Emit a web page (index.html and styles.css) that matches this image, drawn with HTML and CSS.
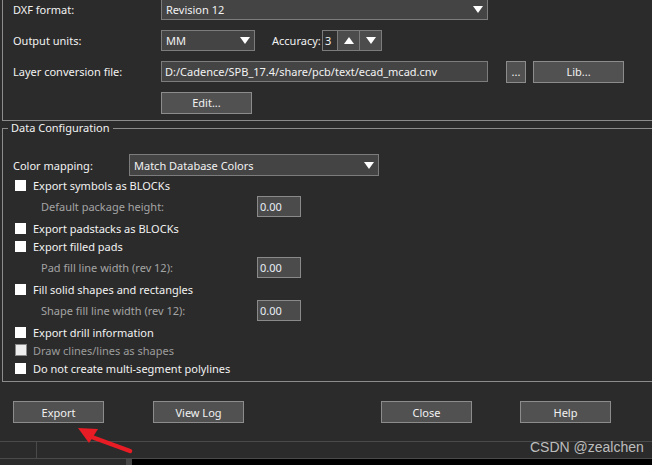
FILE: index.html
```html
<!DOCTYPE html>
<html lang="en">
<head>
    <meta charset="UTF-8">
    <meta name="viewport" content="width=device-width, initial-scale=1.0">
    <title>DXF Out</title>
    <link rel="stylesheet" href="styles.css">
</head>
<body>
    <div class="dialog">
        <div class="group-top">
            <div class="row">
                <label class="label">DXF format:</label>
                <div class="combo combo-wide">
                    <span>Revision 12</span>
                    <span class="arrow"></span>
                </div>
            </div>
            <div class="row">
                <label class="label">Output units:</label>
                <div class="combo combo-units">
                    <span>MM</span>
                    <span class="arrow"></span>
                </div>
                <label class="accuracy">Accuracy:</label>
                <div class="spin">
                    <span class="spin-value">3</span>
                    <span class="spin-btn"><span class="arrow up"></span></span>
                    <span class="spin-btn"><span class="arrow"></span></span>
                </div>
            </div>
            <div class="row">
                <label class="label">Layer conversion file:</label>
                <div class="field field-path">D:/Cadence/SPB_17.4/share/pcb/text/ecad_mcad.cnv</div>
                <button class="btn btn-dots">...</button>
                <button class="btn btn-lib">Lib...</button>
            </div>
            <div class="row">
                <span class="label"></span>
                <button class="btn">Edit...</button>
            </div>
        </div>

        <fieldset class="group-data">
            <legend>Data Configuration</legend>

            <div class="row row-color">
                <label class="label label-color">Color mapping:</label>
                <div class="combo combo-color">
                    <span>Match Database Colors</span>
                    <span class="arrow"></span>
                </div>
            </div>

            <div class="check-row"><span class="box"></span>Export symbols as BLOCKs</div>
            <div class="sub-row">
                <span class="sub-label">Default package height:</span>
                <div class="field field-num">0.00</div>
            </div>
            <div class="check-row"><span class="box"></span>Export padstacks as BLOCKs</div>
            <div class="check-row"><span class="box"></span>Export filled pads</div>
            <div class="sub-row">
                <span class="sub-label">Pad fill line width (rev 12):</span>
                <div class="field field-num">0.00</div>
            </div>
            <div class="check-row"><span class="box"></span>Fill solid shapes and rectangles</div>
            <div class="sub-row">
                <span class="sub-label">Shape fill line width (rev 12):</span>
                <div class="field field-num">0.00</div>
            </div>
            <div class="check-row"><span class="box"></span>Export drill information</div>
            <div class="check-row disabled"><span class="box"></span>Draw clines/lines as shapes</div>
            <div class="check-row"><span class="box"></span>Do not create multi-segment polylines</div>
        </fieldset>

        <div class="actions">
            <button class="btn btn-export">Export</button>
            <button class="btn btn-log">View Log</button>
            <button class="btn btn-close">Close</button>
            <button class="btn btn-help">Help</button>
        </div>

        <div class="status">
            <span class="status-cell"></span>
        </div>
        <div class="taskbar">
            <span class="task-left"></span>
            <span class="task-edge"></span>
            <span class="task-dark"></span>
        </div>

        <svg class="pointer" width="70" height="40" viewBox="70 420 70 40">
            <line x1="89" y1="436" x2="130" y2="451" stroke="#e81c24" stroke-width="4.5" stroke-linecap="round"/>
            <polygon points="78,428 98,429 89,443" fill="#e81c24"/>
        </svg>
        <div class="watermark">CSDN @zealchen</div>
    </div>
</body>
</html>
```

FILE: styles.css
```css
body {
    margin: 0;
    background-color: #2b2b2b;
    font-family: "Noto Sans", "DejaVu Sans", sans-serif;
    font-size: 11px;
    color: #f2f2f2;
    overflow: hidden;
}
.dialog {
    position: relative;
    width: 652px;
    height: 465px;
    overflow: hidden;
}
.group-top {
    margin: -1px -20px 0 2px;
    padding: 0 0 7px 10px;
    border-left: 1px solid #8c8c8c;
    border-bottom: 1px solid #8c8c8c;
    display: flex;
    flex-direction: column;
    gap: 10px;
}
.row {
    display: flex;
    align-items: center;
    height: 21px;
}
.label {
    width: 148px;
    flex: none;
}
.combo {
    box-sizing: border-box;
    flex: none;
    height: 21px;
    display: flex;
    align-items: center;
    justify-content: space-between;
    padding: 0 4px 0 4px;
    background-color: #444444;
    border: 1px solid #7c7c7c;
}
.combo-wide {
    width: 327px;
}
.combo-units {
    width: 94px;
}
.combo-color {
    width: 250px;
    height: 22px;
}
.arrow {
    width: 0;
    height: 0;
    border-left: 5px solid transparent;
    border-right: 5px solid transparent;
    border-top: 7px solid #ffffff;
}
.arrow.up {
    border-top: none;
    border-bottom: 7px solid #ffffff;
}
.accuracy {
    flex: none;
    margin-left: 17px;
    width: 50px;
}
.spin {
    flex: none;
    display: flex;
    height: 21px;
    box-sizing: border-box;
    border: 1px solid #7c7c7c;
    background-color: #3a3a3a;
}
.spin-value {
    width: 14px;
    line-height: 19px;
    padding-left: 2px;
    box-sizing: border-box;
    background-color: #2f2f2f;
}
.spin-btn {
    width: 21px;
    display: flex;
    align-items: center;
    justify-content: center;
    border-left: 1px solid #7c7c7c;
    background-color: #4c4c4c;
}
.field {
    box-sizing: border-box;
    flex: none;
    height: 21px;
    line-height: 19px;
    padding: 0 3px;
    background-color: #444444;
    border: 1px solid #7c7c7c;
    white-space: nowrap;
}
.field-path {
    width: 327px;
}
.field-num {
    width: 44px;
    padding: 0 2px;
    background-color: #4b4b4b;
    border-color: #8a8a8a;
    color: #e8eef6;
}
.btn {
    box-sizing: border-box;
    flex: none;
    width: 91px;
    height: 22px;
    padding: 0;
    background-color: #515151;
    border: 1px solid #8c8c8c;
    color: #f2f2f2;
    font-family: inherit;
    font-size: 11px;
}
.btn-dots {
    width: 20px;
    margin-left: 18px;
}
.btn-lib {
    margin-left: 7px;
}
.group-data {
    margin: 0 -20px 0 2px;
    padding: 19px 0 4px 10px;
    border: 1px solid #8c8c8c;
    border-right: none;
    min-width: 0;
}
.group-data legend {
    margin-left: -5px;
    padding: 0 3px;
    line-height: 14px;
}
.row-color {
    height: 22px;
}
.label-color {
    width: 116px;
}
.check-row {
    height: 18px;
    display: flex;
    align-items: center;
}
.box {
    width: 11px;
    height: 11px;
    margin: 0 7px 0 2px;
    background-color: #ffffff;
    border: 1px solid #ffffff;
    box-sizing: border-box;
}
.check-row.disabled {
    color: #9c9c9c;
}
.check-row.disabled .box {
    width: 12px;
    height: 12px;
    margin-right: 6px;
    background-color: #eeeeee;
    border-color: #8a8a8a;
}
.sub-row {
    height: 25px;
    display: flex;
    align-items: center;
}
.sub-label {
    width: 244px;
    flex: none;
    padding-left: 28px;
    box-sizing: border-box;
    color: #a4a4a4;
}
.actions {
    display: flex;
    margin-top: 19px;
    padding-left: 13px;
}
.btn-log {
    margin-left: 49px;
}
.btn-close {
    margin-left: 137px;
}
.btn-help {
    margin-left: 48px;
}
.status {
    margin-top: 18px;
    height: 16px;
    border-top: 1px solid #4a4a4a;
    border-bottom: 1px solid #4a4a4a;
}
.status-cell {
    display: block;
    width: 36px;
    height: 16px;
    border-right: 1px solid #4a4a4a;
}
.taskbar {
    display: flex;
    height: 8px;
}
.task-left {
    width: 126px;
    background-color: #2b2b2b;
}
.task-edge {
    width: 6px;
    background-color: #474747;
}
.task-dark {
    flex: 1;
    background-color: #000000;
}
.pointer {
    position: absolute;
    left: 70px;
    top: 420px;
}
.watermark {
    position: absolute;
    left: 530px;
    top: 439px;
    font-family: "Liberation Sans", Arial, sans-serif;
    font-size: 14px;
    color: #bdbdbd;
}
```
